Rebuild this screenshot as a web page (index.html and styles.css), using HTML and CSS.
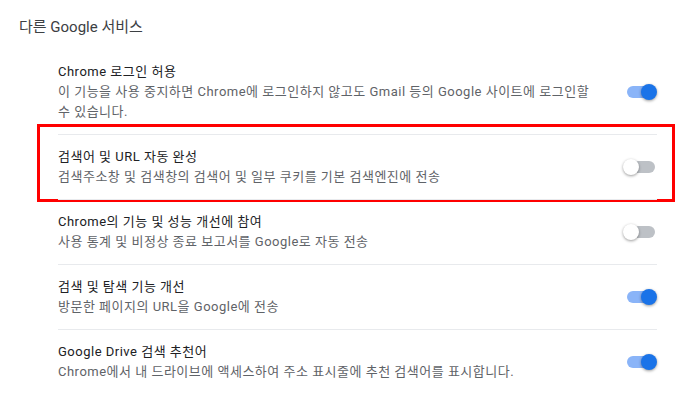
FILE: index.html
```html
<!DOCTYPE html>
<html lang="ko">
<head>
    <meta charset="UTF-8">
    <title>다른 Google 서비스</title>
    <link rel="stylesheet" href="styles.css">
</head>
<body>
    <main class="settings">
        <h2 class="section-title">다른 Google 서비스</h2>

        <div class="settings-list">
            <div class="setting-row first">
                <div class="setting-text">
                    <div class="setting-label">Chrome 로그인 허용</div>
                    <div class="setting-desc">이 기능을 사용 중지하면 Chrome에 로그인하지 않고도 Gmail 등의 Google 사이트에 로그인할 수 있습니다.</div>
                </div>
                <span class="toggle on"><span class="knob"></span></span>
            </div>

            <div class="setting-row highlighted">
                <div class="setting-text">
                    <div class="setting-label">검색어 및 URL 자동 완성</div>
                    <div class="setting-desc">검색주소창 및 검색창의 검색어 및 일부 쿠키를 기본 검색엔진에 전송</div>
                </div>
                <span class="toggle"><span class="knob"></span></span>
            </div>

            <div class="setting-row">
                <div class="setting-text">
                    <div class="setting-label">Chrome의 기능 및 성능 개선에 참여</div>
                    <div class="setting-desc">사용 통계 및 비정상 종료 보고서를 Google로 자동 전송</div>
                </div>
                <span class="toggle"><span class="knob"></span></span>
            </div>

            <div class="setting-row">
                <div class="setting-text">
                    <div class="setting-label">검색 및 탐색 기능 개선</div>
                    <div class="setting-desc">방문한 페이지의 URL을 Google에 전송</div>
                </div>
                <span class="toggle on"><span class="knob"></span></span>
            </div>

            <div class="setting-row">
                <div class="setting-text">
                    <div class="setting-label">Google Drive 검색 추천어</div>
                    <div class="setting-desc">Chrome에서 내 드라이브에 액세스하여 주소 표시줄에 추천 검색어를 표시합니다.</div>
                </div>
                <span class="toggle on"><span class="knob"></span></span>
            </div>
        </div>
    </main>
</body>
</html>
```

FILE: styles.css
```css
body {
    margin: 0;
    padding: 0;
    background-color: #ffffff;
    font-family: Roboto, "Noto Sans CJK KR", sans-serif;
    color: #202124;
}
.settings {
    padding: 17px 20px 0 19px;
}
.section-title {
    margin: 0;
    font-size: 15px;
    font-weight: 400;
    line-height: 20px;
    color: #3c4043;
}
.settings-list {
    margin: 12px 0 0 39px;
}
.setting-row {
    position: relative;
    display: flex;
    align-items: center;
    min-height: 40px;
    padding: 12px 0;
    border-top: 1px solid #e8eaed;
}
.setting-row.first {
    border-top: none;
    padding: 13px 0 12px;
}
.setting-text {
    flex: 1;
    max-width: 545px;
    font-size: 13px;
    line-height: 20px;
    letter-spacing: 0.5px;
}
.setting-label {
    color: #202124;
}
.setting-desc {
    color: #5f6368;
}
/* red annotation box over the second row */
.highlighted::after {
    content: "";
    position: absolute;
    left: -21px;
    right: -18px;
    top: -11px;
    bottom: -3px;
    border: 3px solid #ff0000;
    pointer-events: none;
}
.toggle {
    position: relative;
    margin-left: auto;
    margin-right: 2px;
    width: 28px;
    height: 12px;
    border-radius: 6px;
    background-color: #bdc1c6;
}
.toggle .knob {
    position: absolute;
    top: -2px;
    left: -4px;
    width: 16px;
    height: 16px;
    border-radius: 50%;
    background-color: #ffffff;
    box-shadow: 0 1px 3px rgba(0, 0, 0, 0.4);
}
.toggle.on {
    background-color: #8ab4f8;
}
.toggle.on .knob {
    left: auto;
    right: -2px;
    background-color: #1a73e8;
}
```
